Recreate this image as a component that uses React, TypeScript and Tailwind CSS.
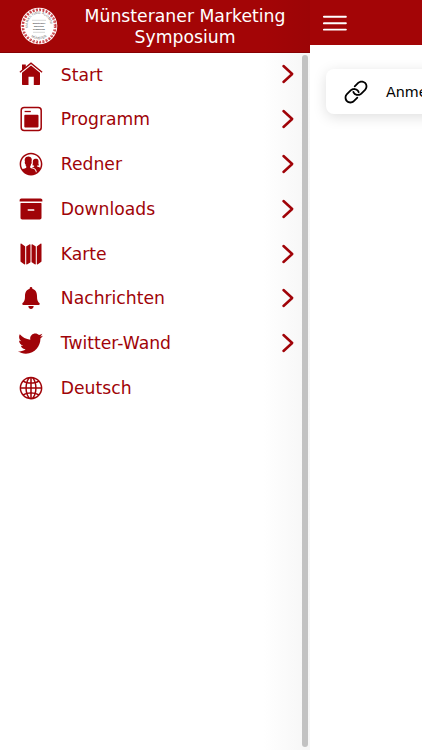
import type { ReactNode } from "react";
import {
  IoIosArchive,
  IoIosContacts,
  IoIosGlobe,
  IoIosMap,
  IoIosNotifications,
  IoIosLink,
  IoLogoTwitter,
} from "react-icons/io";

interface MenuEntry {
  label: string;
  icon: ReactNode;
  hasArrow: boolean;
}

function HomeIcon() {
  return (
    <svg viewBox="0 0 24 24" className="size-6" fill="currentColor">
      <path d="M3 2.6h3.8v2.8L3 8.4Z" />
      <path d="m.9 10.3 11.1-9.1 11.1 9.1" fill="none" stroke="currentColor" strokeWidth="1.4" />
      <path d="M3 10.8 12 3.5l9 7.3v11.5q0 .7-.7.7h-5.5v-8.2H9.5V23H3.7q-.7 0-.7-.7Z" />
    </svg>
  );
}

function ProgramIcon() {
  return (
    <svg viewBox="0 0 24 26" className="h-[26px] w-6" fill="none">
      <rect x="2.2" y="1.5" width="20" height="23" rx="3" stroke="currentColor" strokeWidth="1.5" />
      <path d="M5.6 5.5h6.2" stroke="currentColor" strokeWidth="1.3" />
      <rect x="5.3" y="8.7" width="14.2" height="12.9" rx="1" fill="currentColor" />
    </svg>
  );
}

const menu: MenuEntry[] = [
  { label: "Start", icon: <HomeIcon />, hasArrow: true },
  { label: "Programm", icon: <ProgramIcon />, hasArrow: true },
  { label: "Redner", icon: <IoIosContacts size={28} />, hasArrow: true },
  { label: "Downloads", icon: <IoIosArchive size={28} />, hasArrow: true },
  { label: "Karte", icon: <IoIosMap size={28} />, hasArrow: true },
  { label: "Nachrichten", icon: <IoIosNotifications size={28} />, hasArrow: true },
  { label: "Twitter-Wand", icon: <IoLogoTwitter size={27} />, hasArrow: true },
  { label: "Deutsch", icon: <IoIosGlobe size={28} />, hasArrow: false },
];

function Logo() {
  return (
    <svg viewBox="0 0 38 38" className="size-[38px] shrink-0">
      <defs>
        <path id="ring-top" d="M8.2 21a11.2 11.2 0 1 1 21.6 0" />
        <path id="ring-bottom" d="M5.8 19a13.2 13.2 0 0 0 26.4 0" />
      </defs>
      <circle cx="19" cy="19" r="18.3" fill="#fff" />
      <circle cx="19" cy="19" r="16.2" fill="none" stroke="#c8444a" strokeWidth="2.6" strokeDasharray="2.1 1.2" />
      <circle cx="19" cy="19" r="15.6" fill="none" stroke="#fff" strokeWidth=".7" strokeDasharray="1 2.3" />
      <g fill="#666" fontFamily="Liberation Sans, sans-serif" fontSize="3.4">
        <text textLength="37">
          <textPath href="#ring-top">MARKETING ALUMNI</textPath>
        </text>
        <text textAnchor="middle">
          <textPath href="#ring-bottom" startOffset="50%">MÜNSTER</textPath>
        </text>
      </g>
      <path d="M12 13.3h14M13 25.3h12" stroke="#aaa" strokeWidth=".5" />
      <g fill="#444" fontFamily="Liberation Sans, sans-serif" fontSize="2.1" fontWeight="700" textAnchor="middle">
        <text x="19" y="17.1">Münsteraner</text>
        <text x="19" y="20">Marketing</text>
        <text x="19" y="22.9">Symposium</text>
      </g>
    </svg>
  );
}

function MenuRow({ label, icon, hasArrow }: MenuEntry) {
  return (
    <li className="flex h-[44.8px] items-center pr-[15px] pl-[16.5px]">
      <span className="flex w-7 items-center justify-center">{icon}</span>
      <span className="ml-[16.3px] flex-1 pt-[2px] text-[17.2px]">{label}</span>
      {hasArrow && (
        <svg viewBox="0 0 14 20" className="h-5 w-[14px]" fill="none">
          <path d="m2.5 2 8.7 8-8.7 8" stroke="currentColor" strokeWidth="2.5" strokeLinecap="round" strokeLinejoin="round" />
        </svg>
      )}
    </li>
  );
}

export default function App() {
  return (
    <div className="flex h-[750px] w-[422px] overflow-hidden bg-white font-['DejaVu_Sans',sans-serif]">
      <aside className="flex w-[310px] shrink-0 flex-col text-[#a00308]">
        <header className="flex h-[53px] shrink-0 items-center border-b border-[#870003] bg-linear-to-r from-[#a30506] from-85% to-[#9c0506] pr-[14px] pl-5 text-white">
          <Logo />
          <h1 className="ml-4 flex-1 pt-[2px] text-center text-[17.25px] leading-[21px]">
            Münsteraner Marketing Symposium
          </h1>
        </header>
        <div className="flex min-h-0 flex-1 bg-linear-to-r from-white from-85% to-[#f6f6f6]">
          <ul className="-mt-[1px] flex-1">
            {menu.map((entry) => (
              <MenuRow key={entry.label} {...entry} />
            ))}
          </ul>
          <div className="mt-[2px] mr-[2px] mb-[3px] -ml-[8px] w-[6px] rounded-full bg-[#c2c2c2]" />
        </div>
      </aside>
      <main className="flex w-[112px] flex-col">
        <header className="flex h-[45px] items-center bg-[#a30506] pl-[13px] text-white">
          <svg viewBox="0 0 24 16" className="h-4 w-6">
            <path d="M.9 1.7h22M.9 8.3h22M.9 14.6h22" stroke="currentColor" strokeWidth="1.9" strokeLinecap="round" />
          </svg>
        </header>
        <div className="mt-6 ml-4 flex h-[45px] w-[380px] items-center rounded-lg bg-white pl-4 text-black shadow-[0_3px_14px_rgba(0,0,0,0.13)]">
          <IoIosLink size={28} />
          <span className="ml-4 pt-[2px] text-[14.3px]">Anmeldung</span>
        </div>
      </main>
    </div>
  );
}
